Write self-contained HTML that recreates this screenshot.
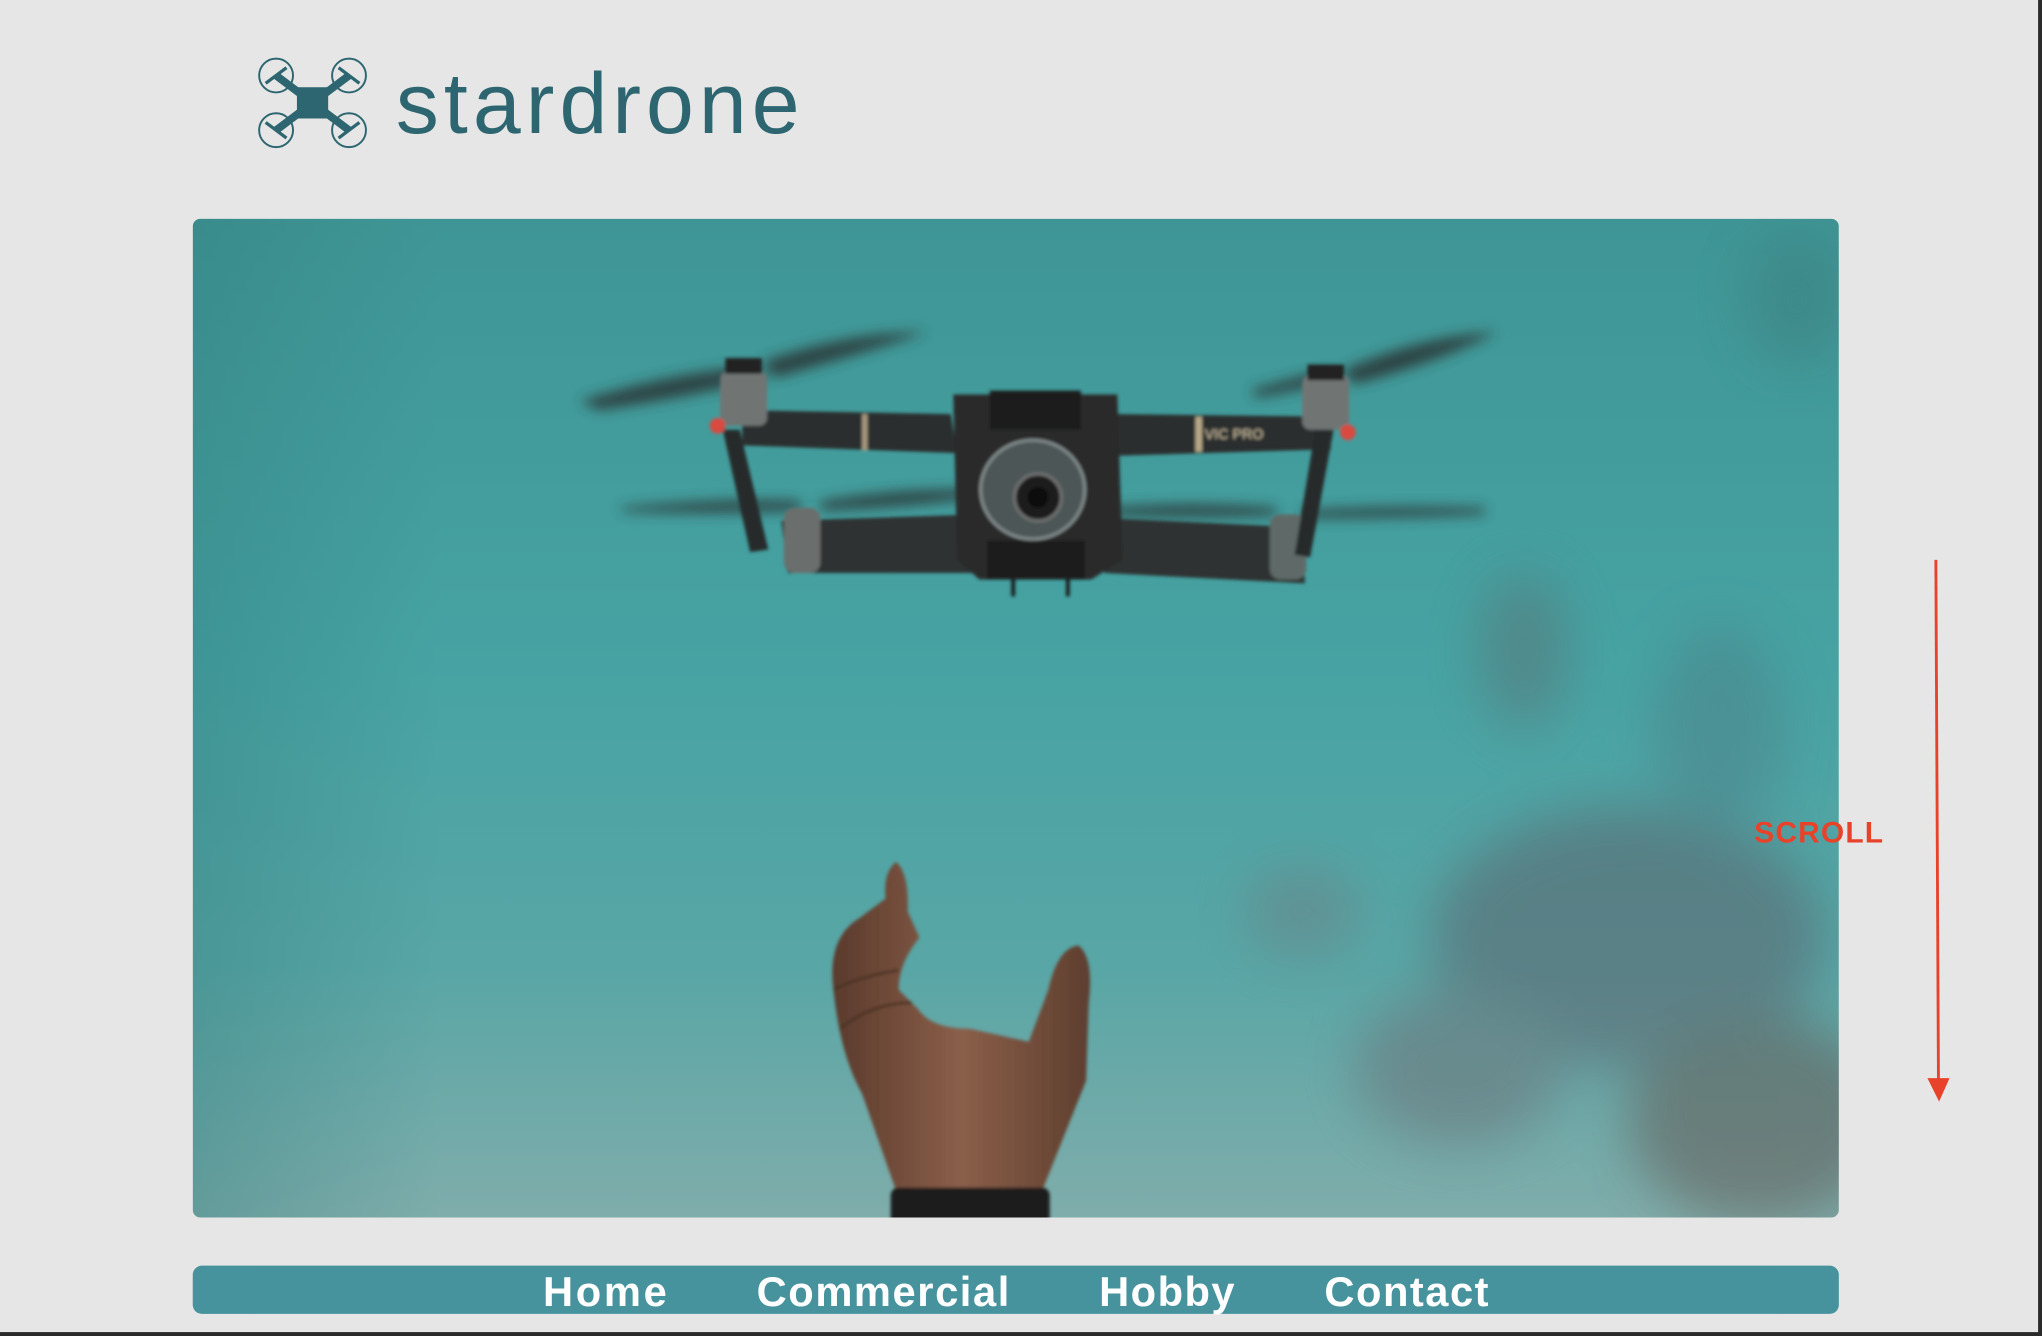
<!DOCTYPE html>
<html><head><meta charset="utf-8"><style>
html,body{margin:0;padding:0;background:#e6e6e6;width:2042px;height:1336px;overflow:hidden}
svg{display:block}
</style></head><body>
<svg width="2042" height="1336" viewBox="0 0 1568 1026" preserveAspectRatio="none" xmlns="http://www.w3.org/2000/svg">
<defs>
<linearGradient id="sky" x1="0" y1="0" x2="0" y2="1">
<stop offset="0" stop-color="#3f9595"/><stop offset="0.45" stop-color="#47a3a3"/><stop offset="0.75" stop-color="#59a6a6"/><stop offset="1" stop-color="#7fadab"/>
</linearGradient>
<linearGradient id="skyx" x1="0" y1="0" x2="1" y2="0">
<stop offset="0" stop-color="#2f7b7b" stop-opacity="0.35"/><stop offset="0.15" stop-color="#2f7b7b" stop-opacity="0"/><stop offset="1" stop-color="#2f7b7b" stop-opacity="0"/>
</linearGradient>
<clipPath id="cl"><rect x="148" y="168" width="1264" height="767" rx="6"/></clipPath>
<filter id="b20" x="-50%" y="-50%" width="200%" height="200%"><feGaussianBlur stdDeviation="20"/></filter>
<filter id="b6" x="-50%" y="-50%" width="200%" height="200%"><feGaussianBlur stdDeviation="5"/></filter>
<filter id="b2"><feGaussianBlur stdDeviation="1.2"/></filter>
<linearGradient id="skin" x1="0" y1="0" x2="1" y2="0"><stop offset="0" stop-color="#5a3a2c"/><stop offset="0.5" stop-color="#8a5f49"/><stop offset="1" stop-color="#5e3e2f"/></linearGradient>
</defs>

<!-- logo -->
<g fill="#2d6670" stroke="#2d6670">
<rect x="228" y="67" width="24" height="24" stroke="none"/>
<line x1="212" y1="58" x2="268" y2="100" stroke-width="6"/>
<line x1="268" y1="58" x2="212" y2="100" stroke-width="6"/>
<g fill="none" stroke-width="1.5">
<circle cx="212" cy="58" r="13"/><circle cx="268" cy="58" r="13"/><circle cx="212" cy="100" r="13"/><circle cx="268" cy="100" r="13"/>
</g>
<g stroke-width="2.5">
<line x1="204" y1="64" x2="220" y2="52"/><line x1="260" y1="52" x2="276" y2="64"/>
<line x1="204" y1="94" x2="220" y2="106"/><line x1="260" y1="106" x2="276" y2="94"/>
</g>
</g>
<text x="304" y="102" font-family="Liberation Sans, sans-serif" font-size="66" fill="#2d6670" textLength="310">stardrone</text>

<!-- hero image -->
<g clip-path="url(#cl)">
<rect x="148" y="168" width="1264" height="767" fill="url(#sky)"/>
<rect x="148" y="168" width="1264" height="767" fill="url(#skyx)"/>
<g filter="url(#b20)" opacity="0.45">
<ellipse cx="1250" cy="720" rx="150" ry="100" fill="#5c5560"/>
<ellipse cx="1350" cy="860" rx="100" ry="80" fill="#5e4a44"/>
<ellipse cx="1120" cy="820" rx="80" ry="60" fill="#6a6870"/>
<ellipse cx="1320" cy="560" rx="50" ry="80" fill="#4c7c84"/>
<ellipse cx="1380" cy="230" rx="40" ry="50" fill="#3c7a7a"/>
<ellipse cx="1170" cy="500" rx="35" ry="60" fill="#5b6c70"/>
<ellipse cx="1000" cy="700" rx="45" ry="35" fill="#6e7a80"/>
</g>
<!-- propellers -->
<g filter="url(#b6)" fill="#2a3434" opacity="0.85">
<path d="M445 308 Q520 285 575 282 L590 290 Q530 305 460 315 Z"/>
<path d="M585 278 Q650 255 712 255 Q650 275 595 290 Z"/>
<path d="M960 300 Q1010 285 1020 285 L1030 290 Q1000 300 965 305 Z"/>
<path d="M1030 285 Q1090 258 1150 255 Q1100 280 1040 295 Z"/>
<path d="M475 390 Q560 382 615 385 L615 392 Q550 395 480 393 Z"/>
<path d="M630 385 Q690 375 745 376 L745 383 Q690 390 630 392 Z"/>
<path d="M850 390 Q920 385 980 390 L980 396 Q920 398 850 396 Z"/>
<path d="M1000 392 Q1070 388 1140 390 L1140 395 Q1070 398 1000 398 Z"/>
</g>
<g filter="url(#b2)">
<path d="M600 400 L750 395 L752 440 L605 440 Z" fill="#2f3030"/>
<path d="M850 398 L1000 405 L1002 448 L848 440 Z" fill="#2f3030"/>
<rect x="602" y="390" width="28" height="50" rx="8" fill="#6a6e6c"/>
<rect x="975" y="395" width="28" height="50" rx="8" fill="#5f6a68"/>
<path d="M570 315 L730 318 L735 348 L570 342 Z" fill="#2c2d2d"/>
<path d="M858 318 L1020 320 L1022 345 L858 350 Z" fill="#2c2d2d"/>
<rect x="662" y="318" width="4" height="28" fill="#a89a80"/>
<rect x="918" y="320" width="5" height="27" fill="#b8a888"/>
<text x="925" y="337" font-family="Liberation Sans, sans-serif" font-size="11" fill="#c8bca0">VIC PRO</text>
<rect x="553" y="285" width="36" height="42" rx="6" fill="#6f7473"/>
<rect x="1000" y="288" width="36" height="42" rx="6" fill="#6f7473"/>
<rect x="557" y="275" width="28" height="12" fill="#222"/>
<rect x="1004" y="280" width="28" height="12" fill="#222"/>
<path d="M555 330 L568 330 L590 422 L576 424 Z" fill="#282a2a"/>
<path d="M1010 330 L1024 330 L1006 428 L994 426 Z" fill="#282a2a"/>
<circle cx="551" cy="327" r="6" fill="#d94a40"/>
<circle cx="1035" cy="332" r="6" fill="#d94a40"/>
<path d="M732 303 L858 303 L862 430 L838 445 L752 445 L735 430 Z" fill="#2a2b2b"/>
<rect x="760" y="300" width="70" height="30" fill="#1e1f1f"/>
<rect x="758" y="415" width="75" height="30" fill="#1a1b1b"/>
<line x1="778" y1="445" x2="778" y2="458" stroke="#1a1a1a" stroke-width="3"/>
<line x1="820" y1="445" x2="820" y2="458" stroke="#1a1a1a" stroke-width="3"/>
<ellipse cx="793" cy="376" rx="40" ry="38" fill="#4d5656" stroke="#8a9494" stroke-width="2"/>
<circle cx="797" cy="382" r="18" fill="#1a1c1c" stroke="#777" stroke-width="2"/>
<circle cx="797" cy="382" r="8" fill="#0b0b0b"/>
</g>
<g filter="url(#b2)">
<path d="M640 760 Q635 720 660 705 L680 690 Q678 670 688 662 Q698 670 697 700 L706 720 Q690 740 690 760 L705 775 Q715 790 745 790 L790 800 L805 760 Q812 728 828 726 Q840 735 836 770 L834 830 L800 915 L690 920 L662 840 Q645 810 640 760 Z" fill="url(#skin)"/>
<path d="M640 760 Q660 750 690 745 M645 790 Q670 770 700 770" stroke="#4a3024" stroke-width="2" fill="none"/>
<rect x="684" y="912" width="122" height="30" rx="6" fill="#1b1d1d"/>
</g>
</g>

<!-- nav -->
<rect x="148" y="972" width="1264" height="37" rx="7" fill="#46939e"/>
<g font-family="Liberation Sans, sans-serif" font-weight="bold" font-size="32" fill="#fff">
<text x="417" y="1003" textLength="95">Home</text>
<text x="581" y="1003" textLength="194">Commercial</text>
<text x="844" y="1003" textLength="104">Hobby</text>
<text x="1017" y="1003" textLength="126">Contact</text>
</g>

<!-- scroll -->
<text x="1347" y="647" font-family="Liberation Sans, sans-serif" font-weight="bold" font-size="23" fill="#e8432a" textLength="99">SCROLL</text>
<line x1="1486.5" y1="430" x2="1488.5" y2="832" stroke="#e8432a" stroke-width="2.2"/>
<polygon points="1480,828 1497,828 1489,846" fill="#e8432a"/>

<rect x="1565" y="0" width="3" height="1026" fill="#2a2a2a"/>
<rect x="0" y="1023" width="1568" height="3" fill="#2a2a2a"/>
</svg>
</body></html>
